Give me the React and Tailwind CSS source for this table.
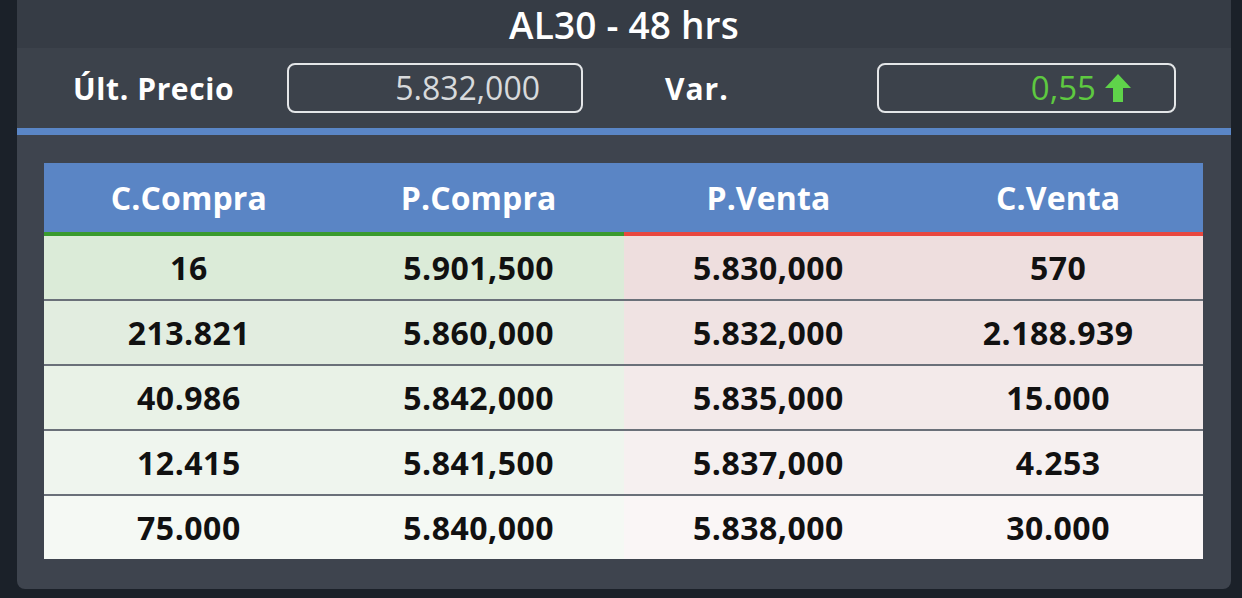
import React from 'react';

const rows = [
    { cc: '16', pc: '5.901,500', pv: '5.830,000', cv: '570', buy: 'bg-[#dbebd8]', sell: 'bg-[#eedede]' },
    { cc: '213.821', pc: '5.860,000', pv: '5.832,000', cv: '2.188.939', buy: 'bg-[#e2ede0]', sell: 'bg-[#f0e3e3]' },
    { cc: '40.986', pc: '5.842,000', pv: '5.835,000', cv: '15.000', buy: 'bg-[#e9f2e7]', sell: 'bg-[#f3eaea]' },
    { cc: '12.415', pc: '5.841,500', pv: '5.837,000', cv: '4.253', buy: 'bg-[#eff5ee]', sell: 'bg-[#f6f0f0]' },
    { cc: '75.000', pc: '5.840,000', pv: '5.838,000', cv: '30.000', buy: 'bg-[#f5f9f4]', sell: 'bg-[#faf6f6]' }
];

const headers = ['C.Compra', 'P.Compra', 'P.Venta', 'C.Venta'];

const font = { fontFamily: '"Open Sans", "Liberation Sans", sans-serif' };

const UpArrow = () => (
    <svg width="28" height="30" viewBox="0 0 28 30" className="ml-2">
        <path d="M14 1 L27 15 L19 15 L19 29 L9 29 L9 15 L1 15 Z" fill="#5fd34a" />
    </svg>
);

const App = () => {
    return (
        <div className="w-[1242px] h-[598px] bg-[#1b2129] overflow-hidden" style={font}>
            <div className="ml-[17px] w-[1214px] h-[589px] bg-[#3e444e] rounded-b-lg overflow-hidden">
                <div className="h-[48px] bg-[#363c45] flex items-center justify-center text-white font-semibold text-[37px] leading-none tracking-[0.2px]">
                    AL30 - 48 hrs
                </div>
                <div className="h-[80px] bg-[#3c424b] flex items-center">
                    <div className="ml-[56px] w-[214px] text-white font-bold text-[30px] tracking-[0.6px]">Últ. Precio</div>
                    <div className="w-[296px] h-[50px] border-2 border-[#e4e6e8] rounded-lg flex items-center justify-end pr-[41px] text-[#d8dadc] text-[32px]">
                        5.832,000
                    </div>
                    <div className="ml-[82px] w-[212px] text-white font-bold text-[30px] tracking-[1px]">Var.</div>
                    <div className="w-[299px] h-[50px] border-2 border-[#e4e6e8] rounded-lg flex items-center justify-end pr-[42px] text-[#5ec940] text-[33px]">
                        0,55
                        <UpArrow />
                    </div>
                </div>
                <div className="h-[7px] bg-[#5a86c6]" />
                <div className="pt-[28px] pl-[27px] pr-[28px]">
                    <div className="grid grid-cols-4 h-[69px] bg-[#5a85c5] text-white font-bold text-[32px] tracking-[0.1px]">
                        {headers.map((h) => (
                            <div key={h} className="flex items-center justify-center">{h}</div>
                        ))}
                    </div>
                    <div className="flex h-[4px]">
                        <div className="flex-1 bg-[#3a9a2e]" />
                        <div className="flex-1 bg-[#e8473f]" />
                    </div>
                    {rows.map((r, i) => (
                        <div key={i}>
                            {i > 0 && <div className="h-[2px] bg-[#6a7079]" />}
                            <div className="grid grid-cols-4 h-[63px] text-[#111] font-bold text-[32px] tracking-[0.5px]">
                                <div className={`${r.buy} flex items-center justify-center`}>{r.cc}</div>
                                <div className={`${r.buy} flex items-center justify-center`}>{r.pc}</div>
                                <div className={`${r.sell} flex items-center justify-center`}>{r.pv}</div>
                                <div className={`${r.sell} flex items-center justify-center`}>{r.cv}</div>
                            </div>
                        </div>
                    ))}
                </div>
            </div>
        </div>
    );
};

export default App;
